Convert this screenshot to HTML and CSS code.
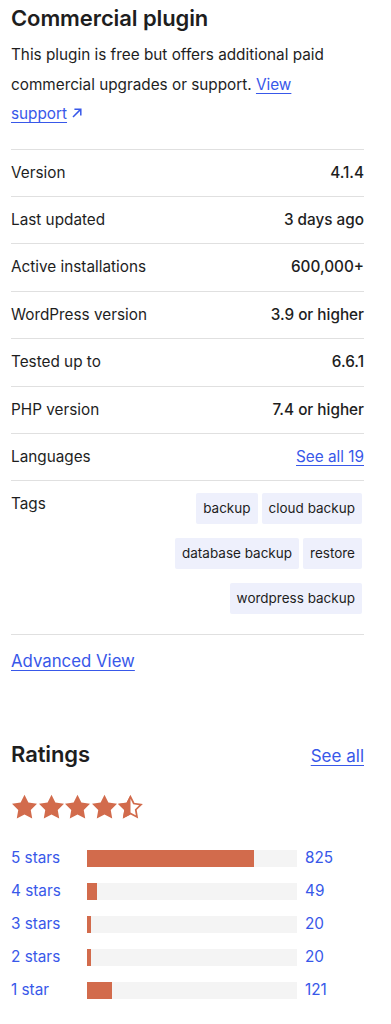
FILE: index.html
```html
<!DOCTYPE html>
<html lang="en">
<head>
<meta charset="utf-8">
<title>Plugin details</title>
<link rel="stylesheet" href="styles.css">
</head>
<body>
<main class="page">
  <section class="commercial">
    <h2 class="title">Commercial plugin</h2>
    <p class="desc">This plugin is free but offers additional paid commercial upgrades or support. <a class="link" href="#">View <span class="nowrap">support<svg class="ext" viewBox="0 0 12 12" width="12" height="12"><path d="M2 10L9.6 2.4M3.4 2.2H9.8V8.6" fill="none" stroke="currentColor" stroke-width="1.5"/></svg></span></a></p>
  </section>

  <ul class="meta">
    <li class="row"><span class="label">Version</span><strong class="value">4.1.4</strong></li>
    <li class="row"><span class="label">Last updated</span><strong class="value">3 days ago</strong></li>
    <li class="row"><span class="label">Active installations</span><strong class="value">600,000+</strong></li>
    <li class="row"><span class="label">WordPress version</span><strong class="value">3.9 or higher</strong></li>
    <li class="row"><span class="label">Tested up to</span><strong class="value">6.6.1</strong></li>
    <li class="row"><span class="label">PHP version</span><strong class="value">7.4 or higher</strong></li>
    <li class="row"><span class="label">Languages</span><a class="link value-link" href="#">See all 19</a></li>
    <li class="row row-tags"><span class="label">Tags</span>
      <div class="tags">
        <a class="tag" href="#">backup</a>
        <a class="tag" href="#">cloud backup</a>
        <a class="tag" href="#">database backup</a>
        <a class="tag" href="#">restore</a>
        <a class="tag" href="#">wordpress backup</a>
      </div>
    </li>
  </ul>

  <a class="link advanced" href="#">Advanced View</a>

  <section class="ratings">
    <div class="ratings-head">
      <h2 class="title">Ratings</h2>
      <a class="link see-all" href="#">See all</a>
    </div>
    <div class="stars" aria-label="4.5 out of 5 stars">
      <svg class="star" viewBox="2 1.6 20 19.6"><path d="M12 2l3.09 6.26L22 9.27l-5 4.87 1.18 6.88L12 17.770l-6.18 3.25L7 14.14 2 9.27l6.91-1.01L12 2z"/></svg>
      <svg class="star" viewBox="2 1.6 20 19.6"><path d="M12 2l3.09 6.26L22 9.27l-5 4.87 1.18 6.88L12 17.77l-6.18 3.25L7 14.14 2 9.27l6.91-1.01L12 2z"/></svg>
      <svg class="star" viewBox="2 1.6 20 19.6"><path d="M12 2l3.09 6.26L22 9.27l-5 4.87 1.18 6.88L12 17.77l-6.18 3.25L7 14.14 2 9.27l6.91-1.01L12 2z"/></svg>
      <svg class="star" viewBox="2 1.6 20 19.6"><path d="M12 2l3.09 6.26L22 9.27l-5 4.87 1.18 6.88L12 17.77l-6.18 3.25L7 14.14 2 9.27l6.91-1.01L12 2z"/></svg>
      <svg class="star" viewBox="2 1.6 20 19.6"><path class="star-outline" d="M12 3.7l2.6 5.3 5.8 0.85-4.2 4.1 1 5.8L12 17l-5.2 2.75 1-5.8-4.2-4.1 5.8-0.85z"/><path d="M12 2L8.91 8.26 2 9.27l5 4.87-1.18 6.88L12 17.77z"/></svg>
    </div>
    <ul class="bars">
      <li class="bar-row"><a class="link-plain" href="#">5 stars</a><span class="track"><span class="fill" style="width:79.7%"></span></span><a class="link-plain" href="#">825</a></li>
      <li class="bar-row"><a class="link-plain" href="#">4 stars</a><span class="track"><span class="fill" style="width:4.7%"></span></span><a class="link-plain" href="#">49</a></li>
      <li class="bar-row"><a class="link-plain" href="#">3 stars</a><span class="track"><span class="fill" style="width:1.9%"></span></span><a class="link-plain" href="#">20</a></li>
      <li class="bar-row"><a class="link-plain" href="#">2 stars</a><span class="track"><span class="fill" style="width:1.9%"></span></span><a class="link-plain" href="#">20</a></li>
      <li class="bar-row"><a class="link-plain" href="#">1 star</a><span class="track"><span class="fill" style="width:11.7%"></span></span><a class="link-plain" href="#">121</a></li>
    </ul>
  </section>
</main>
</body>
</html>
```

FILE: styles.css
```css
* { box-sizing: border-box; }
html, body { margin: 0; padding: 0; background: #fff; }
body {
  font-family: Inter, "Noto Sans", "Liberation Sans", sans-serif;
  color: #1e1e1e;
  font-size: 15.3px;
}
.page {
  width: 364px;
  padding: 4px 0 40px 11px;
}
.title {
  margin: 0;
  font-size: 22px;
  line-height: 28px;
  font-weight: 600;
  letter-spacing: -0.1px;
}
.desc {
  margin: 8px 0 0;
  font-size: 15.3px;
  line-height: 29.5px;
  color: #1e1e1e;
}
.link {
  color: #3858e9;
  text-decoration: underline;
  text-underline-offset: 3px;
  text-decoration-thickness: 1px;
}
.nowrap { white-space: nowrap; }
.ext {
  display: inline-block;
  width: 12px;
  height: 12px;
  margin-left: 4px;
  vertical-align: 0px;
}
.meta {
  list-style: none;
  margin: 20px 0 0;
  padding: 0;
}
.row {
  display: flex;
  justify-content: space-between;
  align-items: flex-start;
  padding: 12px 0;
  line-height: 22.4px;
  border-top: 1px solid #e0e0e0;
}
.row:last-child { border-bottom: 1px solid #e0e0e0; }
.value { font-weight: 500; }
.row-tags { padding-bottom: 20px; }
.tags {
  display: flex;
  flex-wrap: wrap;
  justify-content: flex-end;
  gap: 14px 4px;
  width: 190px;
  margin-right: 2px;
}
.tag {
  display: block;
  background: #eef0fc;
  color: #1e1e1e;
  text-decoration: none;
  font-size: 13.5px;
  line-height: 19px;
  padding: 6px 7px;
  border-radius: 2px;
}
.advanced {
  display: inline-block;
  margin-top: 14px;
  font-size: 16.8px;
  line-height: 24px;
}
.ratings { margin-top: 65px; }
.ratings-head {
  display: flex;
  justify-content: space-between;
  align-items: center;
}
.see-all {
  font-size: 17px;
  line-height: 28px;
  margin-top: 4px;
}
.stars {
  display: flex;
  gap: 1.5px;
  margin-top: 24px;
  margin-left: 1px;
  height: 25px;
}
.star {
  width: 25px;
  height: 25px;
  fill: #d26b4c;
}
.star-outline {
  fill: none;
  stroke: #d26b4c;
  stroke-width: 1.4;
}
.bars {
  list-style: none;
  margin: 28px 0 0;
  padding: 0;
  display: flex;
  flex-direction: column;
  gap: 11px;
}
.bar-row {
  display: grid;
  grid-template-columns: 68px 210px 1fr;
  column-gap: 8px;
  align-items: center;
  line-height: 22px;
  font-size: 15.3px;
}
.link-plain {
  color: #3858e9;
  text-decoration: none;
}
.track {
  display: block;
  height: 17px;
  background: #f4f4f4;
}
.fill {
  display: block;
  height: 100%;
  background: #d26b4c;
}
```
